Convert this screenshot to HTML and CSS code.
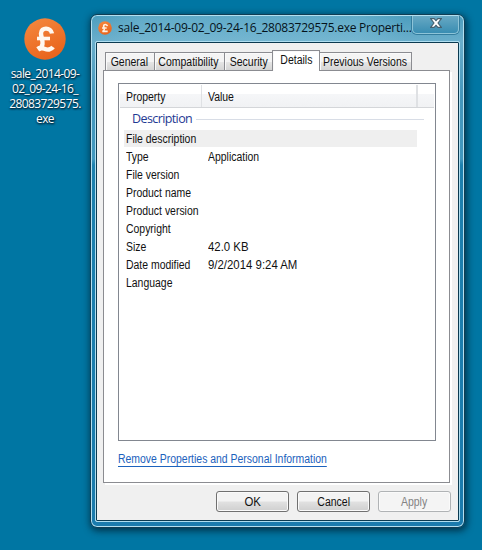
FILE: index.html
```html
<!DOCTYPE html>
<html lang="en">
<head>
<meta charset="utf-8">
<title>Properties</title>
<link rel="stylesheet" href="styles.css">
</head>
<body>
<div class="desktop">
  <div class="shortcut">
    <svg class="shortcut-icon" viewBox="0 0 42 42">
      <defs><linearGradient id="coin" x1="0" y1="0" x2="0.5" y2="1"><stop offset="0" stop-color="#f58a40"/><stop offset="1" stop-color="#e9651d"/></linearGradient></defs>
      <circle cx="21" cy="21" r="20.700" fill="url(#coin)"/>
      <g fill="none" stroke="#fff8f0" stroke-width="4.400"><path d="M28 15.500C27 9.500 17 8.500 17 15.500C17 19 19 22 18.500 26C18.200 28.500 16.500 30.500 14.500 31.500"/><path d="M13 20.500H26" stroke-width="3.600"/><path d="M13.500 31C18 28 21 32.500 25 31.500C27 31 28 30.500 29 29"/></g>
    </svg>
    <div class="shortcut-name"><div>sale_2014-09-</div><div>02_09-24-16_</div><div>28083729575.</div><div>exe</div></div>
  </div>
  <div class="window">
    <div class="titlebar">
      <svg class="title-icon" viewBox="0 0 42 42">
        <circle cx="21" cy="21" r="20.500" fill="url(#coin)"/>
        <g fill="none" stroke="#fff1e4" stroke-width="5"><path d="M28 15.500C27 9.500 17 8.500 17 15.500C17 19 19 22 18.500 26C18 29 16.500 30.500 14.500 31.500"/><path d="M12 21H26M13 31H29"/></g>
      </svg>
      <span class="title">sale_2014-09-02_09-24-16_28083729575.exe Properti...</span>
      <div class="close">
        <svg viewBox="0 0 12 10"><path d="M.6.6H4.100L6 2.700 7.900.6H11.400L8 5 11.400 9.400H7.900L6 7.300 4.100 9.400H.6L4 5Z" fill="#fff" stroke="#45606f" stroke-width="1.100"/></svg>
      </div>
    </div>
    <div class="client">
      <div class="tabs">
        <div class="tab general"><span>General</span></div>
        <div class="tab compat"><span>Compatibility</span></div>
        <div class="tab security"><span>Security</span></div>
        <div class="tab details"><span>Details</span></div>
        <div class="tab previous"><span>Previous Versions</span></div>
      </div>
      <div class="panel">
        <div class="list">
          <div class="header"><div class="h-prop"><span>Property</span></div><div class="h-val"><span>Value</span></div></div>
          <div class="group"><span>Description</span><i></i></div>
          <div class="rows">
            <div class="row selected"><div><span>File description</span></div></div>
            <div class="row"><div><span>Type</span></div><div><span>Application</span></div></div>
            <div class="row"><div><span>File version</span></div></div>
            <div class="row"><div><span>Product name</span></div></div>
            <div class="row"><div><span>Product version</span></div></div>
            <div class="row"><div><span>Copyright</span></div></div>
            <div class="row"><div><span>Size</span></div><div><span class="num">42.0 KB</span></div></div>
            <div class="row"><div><span>Date modified</span></div><div><span class="num">9/2/2014 9:24 AM</span></div></div>
            <div class="row"><div><span>Language</span></div></div>
          </div>
        </div>
        <div class="link"><span>Remove Properties and Personal Information</span></div>
      </div>
      <div class="buttons">
        <div class="button"><span class="num">OK</span></div>
        <div class="button"><span>Cancel</span></div>
        <div class="button disabled"><span>Apply</span></div>
      </div>
    </div>
  </div>
</div>
</body>
</html>
```
FILE: styles.css
```css
* { box-sizing: border-box; }
body { margin: 0; font: 12px/18px "Liberation Sans", Arial, sans-serif; color: #111; }
.desktop { width: 482px; height: 550px; overflow: hidden; background: #0076a3; display: flex; }
.shortcut { width: 90px; flex: none; padding-top: 18px; display: flex; flex-direction: column; align-items: center; }
.shortcut-icon { width: 42px; height: 42px; }
.shortcut-name { margin-top: 6px; font: 12px/15px "Open Sans", sans-serif; letter-spacing: -.6px; color: #fff; text-align: center; text-shadow: 1px 1px 2px #002438, 0 1px 2px #002438; }
.window { width: 375px; height: 514px; flex: none; margin-top: 14px; padding: 0 4px; border: 1px solid #103e54; border-radius: 7px; background: linear-gradient(#4b9dbe 0, #6aaecb 26px, #4597bc 80px, #4197be 144px, #1c80ae 150px, #1b7bad 100%); box-shadow: inset 0 0 0 1px #b3dfef, 1px 2px 7px 1px rgba(0,25,40,.7); }
.titlebar { height: 25px; margin-top: 1px; display: flex; position: relative; padding-left: 3px; background: linear-gradient(90deg, transparent, rgba(140,200,222,.3) 12%, rgba(140,200,222,.3) 72%, transparent 85%); }
.title-icon { width: 14px; height: 14px; margin-top: 5px; flex: none; }
.title { margin-left: 6px; margin-top: 3px; font: 12px/18px "Open Sans", sans-serif; letter-spacing: -.24px; white-space: nowrap; color: #05131b; }
.close { position: absolute; left: 317px; top: 0; width: 47px; height: 18px; border: 1px solid #8dc4d8; border-top: 0; border-radius: 0 0 5px 5px; background: linear-gradient(#68a9c4, #398db2); box-shadow: 0 0 0 1px #347d9e; clip-path: inset(0 -1px -1px -1px); }
.close svg { display: block; width: 12px; height: 10px; margin: 2px auto 0; }
.client { height: 481px; width: 365px; border: 1px solid #afdef0; border-radius: 2px; background: #f0f0f0; box-shadow: inset 0 0 0 1px #0b3a50; padding: 8px 9px 0 7px; }
.tabs { height: 20px; display: flex; align-items: flex-end; padding-left: 2px; }
.tab { height: 18px; display: flex; justify-content: center; border: 1px solid #8b8c91; border-bottom: 0; background: linear-gradient(#f4f4f4 0 50%, #e5e5e5 55%, #d5d5d5); box-shadow: inset 1px 1px #fafafa; white-space: nowrap; line-height: 19px; margin-right: -1px; flex: none; }
.tab span, .button span { display: inline-block; flex: none; transform: scaleX(.875); }
.tab.general { width: 50px; padding-right: 2px; }
.tab.compat { width: 71px; padding-right: 2px; }
.tab.security { width: 49px; }
.tab.details { width: 48px; height: 21px; background: #fff; margin-bottom: -1px; position: relative; line-height: 18px; }
.tab.previous { width: 93px; margin-right: 0; }
.panel { height: 413px; width: 347px; border: 1px solid #8b8c91; background: #fff; box-shadow: 2px 2px #fff; padding: 12px 0 0 14px; }
.list { width: 318px; height: 358px; border: 1px solid #828790; background: #fff; padding: 1px; }
.header span, .row span, .link span { display: inline-block; transform: scaleX(.87); transform-origin: left; }
.row .num, .button .num { transform: scaleX(.95); }
.header { height: 23px; display: flex; border-bottom: 1px solid #d4d6d9; background: linear-gradient(#fff 0 40%, #f5f6f8 42%, #f1f2f4); line-height: 25px; width: 314px; }
.h-prop { width: 82px; padding-left: 6px; border-right: 1px solid #dfe1e4; }
.h-val { width: 216px; padding-left: 6px; border-right: 2px solid #dfe1e4; }
.group { height: 22px; display: flex; align-items: center; padding-left: 12px; font: 12.5px/20px "Open Sans", sans-serif; letter-spacing: -.6px; color: #1f3a93; }
.group span { width: 64px; }
.group i { width: 228px; height: 1px; background: #d8dde6; }
.rows { padding-left: 4px; }
.row { width: 293px; height: 18px; display: flex; padding-left: 2px; line-height: 18px; white-space: nowrap; }
.row div:first-child { width: 82px; }
.selected { background: linear-gradient(#efefef, #efefef) 0 0 / 100% 17px no-repeat; }
.link { margin-top: 9px; color: #1c62bd; line-height: 18px; white-space: nowrap; }
.link span { line-height: 14px; border-bottom: 1px solid #1c62bd; }
.buttons { display: flex; justify-content: flex-end; gap: 8px; padding-top: 8px; margin-right: -1px; }
.button { width: 73px; height: 21px; border: 1px solid #707070; border-radius: 3px; background: linear-gradient(#f3f3f3 0 48%, #e1e1e1 52%, #cfcfcf); box-shadow: inset 0 0 0 1px #fafafa; text-align: center; line-height: 20px; }
.disabled { border-color: #b0b3b5; background: #f4f4f4; color: #838383; }
```
